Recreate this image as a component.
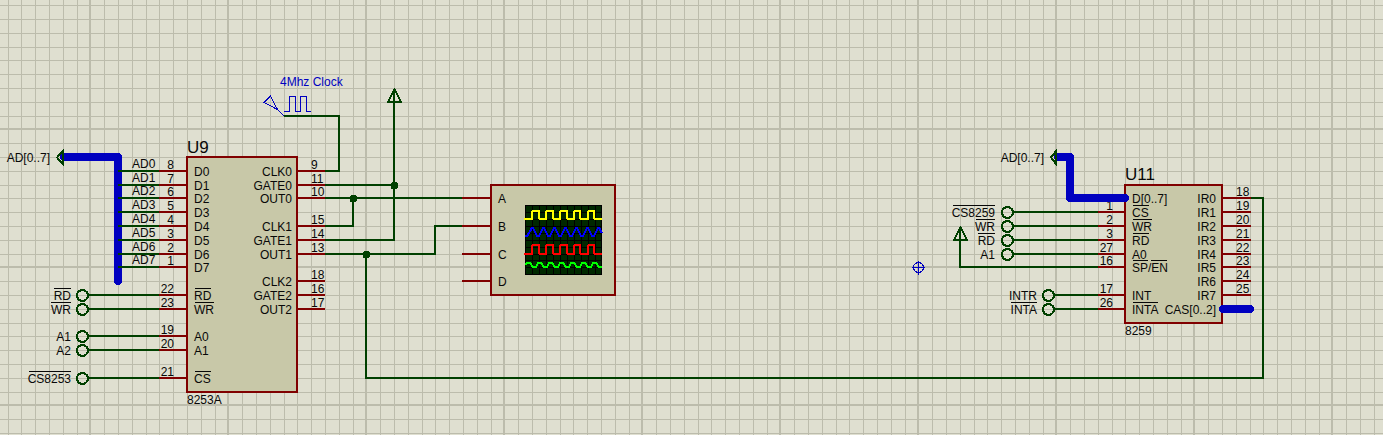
import React from "react";

const PITCH = 13.8;

function gridLines(origin, limit) {
  const start = -Math.floor(origin / PITCH);
  const count = Math.ceil(limit / PITCH);
  return Array.from({ length: count }, (_, i) => {
    const k = start + i;
    return { at: Math.round(origin + k * PITCH), major: k % 10 === 0 };
  });
}

const COLUMNS = gridLines(90.4, 3000);
const ROWS = gridLines(129.4, 2000);

function Grid() {
  return (
    <g className="fill-[#bcbcac]">
      {COLUMNS.map(({ at, major }) => (
        <rect key={at} x={major ? at - 1 : at} y="0" width={major ? 2 : 1} height="2000" />
      ))}
      {ROWS.map(({ at, major }) => (
        <rect key={at} x="0" y={major ? at - 1 : at} width="3000" height={major ? 2 : 1} />
      ))}
    </g>
  );
}

function Label({ x, y, end, children }) {
  return (
    <text x={x} y={y} textAnchor={end ? "end" : "start"}>
      {children}
    </text>
  );
}

function Overline({ from, to, row }) {
  return <rect x={from} y={row - 7} width={to - from} height="1" />;
}

const wire = "fill-none stroke-[#004000] stroke-2";
const pinLine = "fill-none stroke-[#800000] stroke-2";
const body = "fill-[#c8c8a8] stroke-[#800000] stroke-2";
const bus = "fill-none stroke-[#0000c0] stroke-[8px]";

/* A pin: its lead, its number and the name printed inside the body. */
function Pin({ row, number, name, lead, numberX, nameX, side, bars = [] }) {
  const left = side === "left";
  return (
    <g>
      {lead && <path d={`M${lead[0]} ${row}H${lead[1]}`} className={pinLine} />}
      {number && (
        <Label x={numberX} y={row - 2} end={left}>
          {number}
        </Label>
      )}
      <Label x={nameX} y={row + 5} end={!left}>
        {name}
      </Label>
      {bars.map(([from, to]) => (
        <Overline key={from} from={from} to={to} row={row} />
      ))}
    </g>
  );
}

function Terminal({ x, row, name, wireTo, labelX, barFrom }) {
  return (
    <g>
      <path d={`M${x + 6} ${row}H${wireTo}`} className={wire} />
      <circle cx={x + 0.5} cy={row + 0.5} r="5.5" className={wire} />
      <Label x={labelX} y={row + 5} end>
        {name}
      </Label>
      {barFrom && <Overline from={barFrom} to={labelX} row={row} />}
    </g>
  );
}

function Junction({ x, y }) {
  return <circle cx={x + 0.5} cy={y + 0.5} r="4" className="fill-[#004000]" />;
}

const U9_LEFT = [
  [171, "8", "D0"],
  [185, "7", "D1"],
  [198, "6", "D2"],
  [212, "5", "D3"],
  [226, "4", "D4"],
  [240, "3", "D5"],
  [254, "2", "D6"],
  [267, "1", "D7"],
  [295, "22", "RD", [[195, 211]]],
  [309, "23", "WR", [[195, 214]]],
  [336, "19", "A0"],
  [350, "20", "A1"],
  [378, "21", "CS", [[195, 211]]],
];

const U9_RIGHT = [
  [171, "9", "CLK0"],
  [185, "11", "GATE0"],
  [198, "10", "OUT0"],
  [226, "15", "CLK1"],
  [240, "14", "GATE1"],
  [254, "13", "OUT1"],
  [281, "18", "CLK2"],
  [295, "16", "GATE2"],
  [309, "17", "OUT2"],
];

const U11_LEFT = [
  [212, "1", "CS", [[1133, 1149]]],
  [226, "2", "WR", [[1133, 1152]]],
  [240, "3", "RD", [[1133, 1149]]],
  [254, "27", "A0"],
  [267, "16", "SP/EN", [[1133, 1148], [1151, 1167]]],
  [295, "17", "INT"],
  [309, "26", "INTA", [[1133, 1158]]],
];

const U11_RIGHT = [
  [198, "18", "IR0"],
  [212, "19", "IR1"],
  [226, "20", "IR2"],
  [240, "21", "IR3"],
  [254, "22", "IR4"],
  [267, "23", "IR5"],
  [281, "24", "IR6"],
  [295, "25", "IR7"],
];

const TERMINALS = [
  { x: 82, row: 295, name: "RD", wireTo: 159, labelX: 71, barFrom: 54 },
  { x: 82, row: 309, name: "WR", wireTo: 159, labelX: 71, barFrom: 51 },
  { x: 82, row: 336, name: "A1", wireTo: 159, labelX: 71 },
  { x: 82, row: 350, name: "A2", wireTo: 159, labelX: 71 },
  { x: 82, row: 378, name: "CS8253", wireTo: 159, labelX: 71, barFrom: 29 },
  { x: 1007, row: 212, name: "CS8259", wireTo: 1098, labelX: 995, barFrom: 953 },
  { x: 1007, row: 226, name: "WR", wireTo: 1098, labelX: 995, barFrom: 976 },
  { x: 1007, row: 240, name: "RD", wireTo: 1098, labelX: 995, barFrom: 978 },
  { x: 1007, row: 254, name: "A1", wireTo: 1098, labelX: 995 },
  { x: 1048, row: 295, name: "INTR", wireTo: 1098, labelX: 1037 },
  { x: 1048, row: 309, name: "INTA", wireTo: 1098, labelX: 1037, barFrom: 1011 },
];

function Timer() {
  return (
    <g>
      <rect x="187" y="157" width="110" height="235" className={body} />
      <text x="187" y="153" className="text-[17px]">U9</text>
      <Label x={187} y={404}>8253A</Label>
      {U9_LEFT.map(([row, number, name, bars]) => (
        <Pin key={number} row={row} number={number} name={name} bars={bars} lead={[159, 187]} numberX={174} nameX={194} side="left" />
      ))}
      {U9_RIGHT.map(([row, number, name]) => (
        <Pin key={number} row={row} number={number} name={name} lead={[297, 325]} numberX={311} nameX={292} side="right" />
      ))}
    </g>
  );
}

function InterruptController() {
  return (
    <g>
      <rect x="1125" y="185" width="97" height="138" className={body} />
      <text x="1125" y="180" className="text-[17px]">U11</text>
      <Label x={1125} y={335}>8259</Label>
      <Pin row={198} name="D[0..7]" nameX={1132} side="left" />
      {U11_LEFT.map(([row, number, name, bars]) => (
        <Pin key={number} row={row} number={number} name={name} bars={bars} lead={[1098, 1125]} numberX={1113} nameX={1132} side="left" />
      ))}
      {U11_RIGHT.map(([row, number, name]) => (
        <Pin key={number} row={row} number={number} name={name} lead={[1222, 1251]} numberX={1236} nameX={1216} side="right" />
      ))}
      <Pin row={309} name="CAS[0..2]" nameX={1216} side="right" />
    </g>
  );
}

const SCREEN_X = [525, 532, 539, 546, 553, 560, 567, 574, 581, 588, 595, 601];
const SCREEN_Y = [205, 212, 219, 226, 233, 240, 247, 254, 260, 267, 274];

function Oscilloscope() {
  return (
    <g>
      <rect x="491" y="185" width="124" height="110" className={body} />
      {[[198, "A"], [226, "B"], [254, "C"], [281, "D"]].map(([row, name]) => (
        <Pin key={name} row={row} name={name} lead={[462, 491]} nameX={498} side="left" />
      ))}
      <rect x="525" y="205" width="77" height="70" className="fill-[#002800]" />
      <g className="fill-black">
        {SCREEN_X.map((x) => (
          <rect key={x} x={x} y="205" width="1" height="70" />
        ))}
        {SCREEN_Y.map((y) => (
          <rect key={y} x="525" y={y} width="77" height="1" />
        ))}
      </g>
      <g className="fill-none stroke-2" strokeLinejoin="bevel">
        <path d="M524 219H532V211H539V219H546V211H553V219H560V211H567V219H574V211H580V219H588V211H594V219H602" className="stroke-[#ffff00]" />
        <path d="M525 236H527L532 228H533L537 236H539L543 228H544L548 236H550L554 228H555L559 236H561L565 228H566L570 236H572L576 228H577L581 236H583L587 228H588L592 236H594L598 228H599L602 233" className="stroke-[#0000ff] stroke-[2.2px]" />
        <path d="M524 254H532V245H539V254H546V245H553V254H560V245H567V254H574V245H580V254H588V245H594V254H602" className="stroke-[#ff0000]" />
        <path d="M525 265L527 263H530L533 267H536L538 263H541L544 267H547L549 263H552L555 267H558L560 263H563L566 267H569L571 263H574L577 267H580L582 263H585L588 267H591L593 263H596L599 267H602" className="stroke-[#00ff00]" />
      </g>
    </g>
  );
}

function Wiring() {
  return (
    <g>
      <g className={bus} strokeLinecap="round" strokeLinejoin="round">
        <path d="M64 157H118V281" />
        <path d="M1058 157H1070V198H1125" />
        <path d="M1223 309H1250" />
      </g>
      <g className="fill-none stroke-[#004000] stroke-2">
        <path d="M57 157.500L63 151V164Z" />
        <path d="M1051 157.500L1056 151V164Z" />
        <path d="M394.500 89L388 102H401Z" strokeLinejoin="round" />
        <path d="M960.500 227L954 240H967Z" strokeLinejoin="round" />
      </g>
      <g className={wire}>
        <path d="M284 116H339V171H325" />
        <path d="M325 185H394M394 90V240H325" />
        <path d="M325 198H462M353 198V226H325" />
        <path d="M325 254H435V226H462" />
        <path d="M366 254V378H1263V198H1251" />
        <path d="M960 228V267H1098" />
        {U9_LEFT.slice(0, 8).map(([row]) => (
          <path key={row} d={`M118 ${row}H159`} />
        ))}
      </g>
      <Junction x={394} y={185} />
      <Junction x={353} y={198} />
      <Junction x={366} y={254} />
      {U9_LEFT.slice(0, 8).map(([row], i) => (
        <Label key={row} x={132} y={row - 3}>{`AD${i}`}</Label>
      ))}
      <Label x={50} y={162} end>AD[0..7]</Label>
      <Label x={1044} y={162} end>AD[0..7]</Label>
    </g>
  );
}

function ClockSource() {
  return (
    <g>
      <g className="fill-none stroke-[#0000c0] stroke-1">
        <path d="M264 102.500L270.500 96L277.500 109.500ZM277.500 109.500L284 116" />
        <path d="M284 111.500H289.500V96.500H295.500V111.500H300.500V96.500H306.500V111.500H311" />
      </g>
      <text x="280" y="86" className="fill-[#0000c0]">4Mhz Clock</text>
    </g>
  );
}

function OriginMarker() {
  return (
    <g className="fill-none stroke-[#0000c0] stroke-1">
      <circle cx="918.500" cy="267.500" r="5" />
      <path d="M912 267.500H925M918.500 261V275" />
    </g>
  );
}

export default function App() {
  return (
    <main className="min-h-screen w-full overflow-hidden bg-[#dfdfd0]">
      <svg
        role="img"
        aria-label="8253A timer and 8259 interrupt controller schematic"
        shapeRendering="crispEdges"
        className="block h-screen w-full fill-[#080808] font-['Liberation_Sans',Arial,sans-serif] text-[12px]"
      >
        <Grid />
        <Timer />
        <Oscilloscope />
        <InterruptController />
        <Wiring />
        {TERMINALS.map((t) => (
          <Terminal key={`${t.x}-${t.row}`} {...t} />
        ))}
        <ClockSource />
        <OriginMarker />
      </svg>
    </main>
  );
}
